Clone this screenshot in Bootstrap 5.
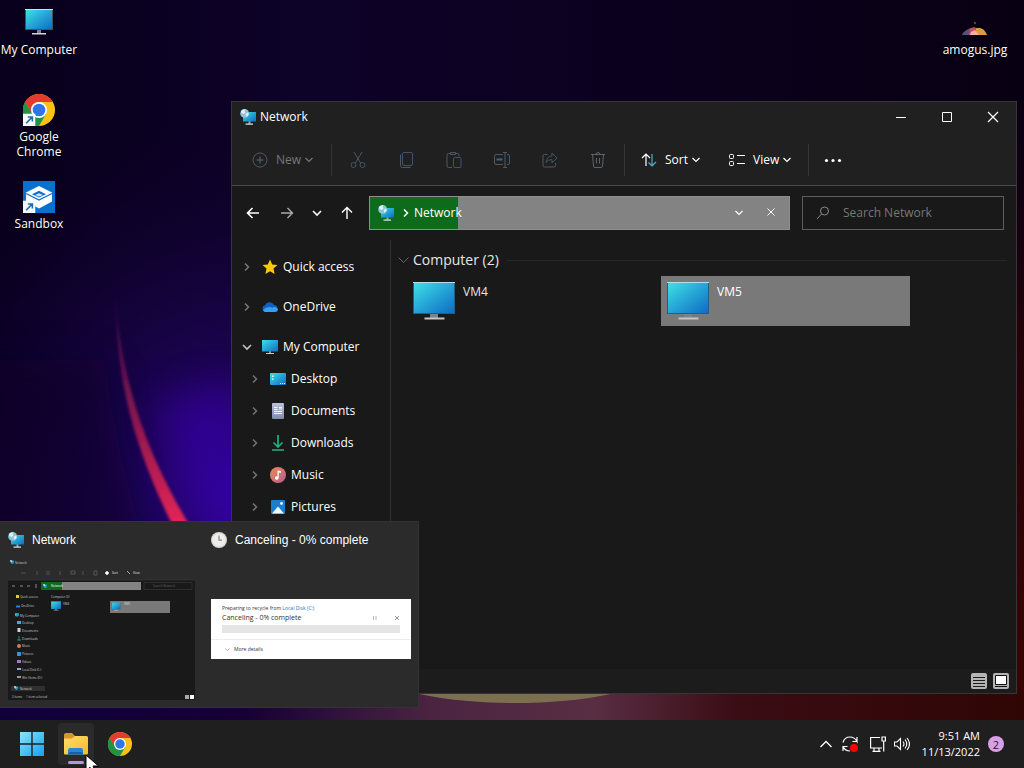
<!DOCTYPE html>
<html lang="en" data-bs-theme="dark">
<head>
<meta charset="utf-8">
<meta name="viewport" content="width=device-width, initial-scale=1">
<title>Desktop</title>
<link href="https://cdn.jsdelivr.net/npm/bootstrap@5.3.0/dist/css/bootstrap.min.css" rel="stylesheet">
<style>
  body { font-family: "Open Sans", "Noto Sans", sans-serif; font-size: 12px; line-height: 16px; color: #fff; background: #0b0120; }
  svg { display: block; flex: none; }
  button { color: inherit; background: none; border: 0; padding: 0; }
  a { color: inherit; text-decoration: none; }
  .i16 { width: 16px; height: 16px; }
  .i20 { width: 20px; height: 20px; }
  .stroke { fill: none; stroke: currentColor; }
  .wallpaper { position: absolute; inset: 0; width: 100%; height: 100%; }

  .icons-area { padding: 7px 10px 0 0; }
  .shortcut { width: 78px; height: 87px; line-height: 15px; gap: 3px; text-shadow: 0 1px 2px #000; }
  .shortcut svg { width: 32px; height: 32px; }

  .explorer { position: absolute; left: 231px; right: 7px; top: 101px; bottom: 26px; background: #191919; border: 1px solid #3a3338; }
  .titlebar { height: 29px; background: #202020; }
  .titlebar .caption-btn { width: 46px; height: 29px; }
  .tools { height: 55px; background: #202020; border-bottom: 1px solid #484848; padding-top: 4px; }
  .tools .divider { width: 1px; height: 32px; background: #343434; }
  .tool-set { padding: 0 2px; }
  .tool { width: 48px; height: 32px; color: #4c5964; }
  .btn-new { width: 99px; padding-left: 20px; color: #777; }
  .btn-sort { width: 88px; padding-left: 16px; }
  .btn-view { width: 95px; padding-left: 16px; }
  .address-row { height: 54px; padding: 0 12px 0 2px; }
  .step { width: 30px; height: 34px; }
  .address { height: 34px; border: 1px solid #8e8e8e; background: #838383; margin-left: 7px; margin-right: 12px; }
  .address .load { position: absolute; inset: 0; height: 100%; border-radius: 0; background: #838383; }
  .address .load .progress-bar { background: #0f6b1c; }
  .address .trail { gap: 16px; padding-right: 10px; }
  .search { width: 202px; height: 34px; border: 1px solid #5e5e5e; padding: 0 12px; color: #8a8a8a; }
  .search input { background: none; border: 0; outline: 0; color: #ccc; min-width: 0; padding: 0; }
  .search input::placeholder { color: #777; opacity: 1; }
  .tree { width: 159px; border-right: 1px solid #303030; padding: 11px 0 0 7px; }
  .tree a { height: 32px; gap: 5px; }
  .tree .chev { color: #777; margin-right: 2px; }
  .tree .open { color: #c4c4c4; }
  .tree .top { margin-bottom: 8px; }
  .tree .sub { padding-left: 8px; }
  .files { padding: 10px 9px 0 6px; }
  .group-head { font-size: 14px; line-height: 20px; color: #e6e6e6; }
  .group-head hr { margin: 0 0 0 8px; color: #555; }
  .tiles { padding: 6px 0 0 10px; gap: 5px; }
  .tile { width: 249px; height: 50px; padding: 0 6px; gap: 8px; border: 0; color: #e6e6e6; }
  .tile svg { width: 42px; height: 42px; margin-top: 4px; }
  .tile span { margin-top: 8px; }
  .tile.active { background: #797979; color: #fff; }
  .statusbar { height: 24px; background: #1c1c1c; padding-right: 7px; gap: 6px; }

  .previews { position: absolute; left: 0; bottom: 12px; width: 419px; height: 187px; background: #2b2b2b; border: 1px solid #333; border-left: 0; font-family: "Liberation Sans", sans-serif; }
  .previews .head { height: 36px; gap: 8px; padding-left: 8px; }
  .pane-a { width: 203px; }
  .mini { width: 188px; height: 146px; margin-left: 8px; font-family: "Open Sans", sans-serif; }
  .progress-card { margin: 41px 7px 0 8px; height: 60px; background: #fff; color: #333; font: 5px/8px "Open Sans", sans-serif; padding: 5px 11px 0; }
  .progress-card .state { font-size: 7px; line-height: 11px; }
  .progress-card a { color: #1776c8; }
  .progress-card .track { height: 8px; margin: 2px 0 6px; border-radius: 0; background: #e5e5e5; }
  .progress-card .more { margin: 0 -11px; padding: 5px 14px; border-top: 1px solid #ececec; }

  .taskbar { height: 48px; background: #1f1f1f; padding: 0 20px 0 10px; z-index: 3; }
  .task { width: 44px; height: 44px; }
  .task-icon { width: 36px; height: 42px; border-radius: 4px; }
  .current .task-icon { background: #2a2a2a; }
  .task .mark-line { position: absolute; left: 14px; right: 14px; bottom: 2px; height: 3px; border-radius: 2px; background: #b594d8; }
  .clock { font-size: 11px; line-height: 16px; margin: 0 8px 0 12px; }
  .count { width: 16px; height: 16px; background: #d9a0e6; color: #2b1430; font-size: 11px; font-weight: 400; }
  .pointer { position: absolute; left: 85px; bottom: -6px; width: 14px; height: 20px; z-index: 5; }
</style>
</head>
<body class="vh-100 d-flex flex-column overflow-hidden position-relative">

<svg width="0" height="0" class="position-absolute" aria-hidden="true">
  <defs>
    <linearGradient id="scr" x1="0" y1="0" x2="1" y2="1"><stop offset="0" stop-color="#3fe0e6"/><stop offset=".5" stop-color="#25a5d6"/><stop offset="1" stop-color="#0e6cc4"/></linearGradient>
    <linearGradient id="win" x1="0" y1="0" x2="1" y2="1"><stop offset="0" stop-color="#8be4fb"/><stop offset="1" stop-color="#14a0ee"/></linearGradient>
    <linearGradient id="fold" x1="0" y1="0" x2="1" y2="1"><stop offset="0" stop-color="#ffdd6a"/><stop offset="1" stop-color="#f4ba2c"/></linearGradient>
    <linearGradient id="mus" x1="0" y1="0" x2="1" y2="1"><stop offset="0" stop-color="#ee8a50"/><stop offset="1" stop-color="#b65c96"/></linearGradient>
    <linearGradient id="docg" x1="0" y1="0" x2="0" y2="1"><stop offset="0" stop-color="#b9c3d8"/><stop offset="1" stop-color="#7f8cab"/></linearGradient>
  </defs>
  <symbol id="pc" viewBox="0 0 42 42"><path d="M17 34h8v4h-8z" fill="#7d8388"/><path d="M11.500 37.500h20v2h-20z" fill="#c3c7ca"/><path d="M0 2h42v32H0z" fill="#235e80"/><path d="M0 2h42v1H0z" fill="#b5dce8"/><path d="M1 3h40v30H1z" fill="url(#scr)"/></symbol>
  <symbol id="pc-s" viewBox="0 0 16 16"><path d="M7 12h2v2H7z" fill="#8b9298"/><path d="M4 14h8v1H4z" fill="#c9ced2"/><path d="M0 1h16v11.500H0z" fill="url(#scr)"/></symbol>
  <symbol id="net" viewBox="0 0 16 16"><path d="M8.500 12h2v3h-2z" fill="#8fa0aa"/><path d="M5.500 14.500h7.500v1.200H5.500z" fill="#dfe6ea"/><path d="M3 3h13v9.500H3z" fill="url(#scr)"/><circle cx="4.600" cy="4.400" r="4.400" fill="#8cc5d8"/><path d="M1 2.600C2 .8 4 0 5.600.300L4.500 2 5.500 3.500 3.500 5 1.500 4zM5.500 5 8 3.500 8.700 5.500 6.600 8z" fill="#e2f2f4"/></symbol>
  <symbol id="chrome" viewBox="0 0 48 48"><circle cx="24" cy="24" r="24" fill="#fbc116"/><path d="M3.200 12A24 24 0 0 0 24 48L34.400 30 24 24H10.200z" fill="#229342"/><path d="M3.200 12A24 24 0 0 1 44.800 12H24A12 12 0 0 0 13.600 30z" fill="#e33b2e"/><path d="M3.200 12 13.600 30 24 36 18 47.200A24 24 0 0 1 3.200 12z" fill="#229342"/><circle cx="24" cy="24" r="12" fill="#fff"/><circle cx="24" cy="24" r="9.500" fill="#2f75e8"/></symbol>
  <symbol id="arrow-badge" viewBox="0 0 12 12"><path d="M0 0h12v12H0z" fill="#f5f9fc"/><path d="M3 9.300 8.300 4M4.600 3.300H9v4.400" fill="none" stroke="#1a6ea5" stroke-width="1.500"/></symbol>
  <symbol id="down" viewBox="0 0 16 16"><path d="m4.500 6 3.500 3.500L11.500 6" class="stroke" stroke-width="1.200"/></symbol>
  <symbol id="right" viewBox="0 0 16 16"><path d="m6 4.500 3.500 3.500L6 11.500" class="stroke" stroke-width="1.500"/></symbol>
  <symbol id="x" viewBox="0 0 16 16"><path d="m3 3 10 10M13 3 3 13" class="stroke" stroke-width="1.200"/></symbol>
</svg>

<svg class="wallpaper" viewBox="0 0 1024 768" preserveAspectRatio="none" aria-hidden="true">
  <defs>
    <linearGradient id="base" x1="0" y1="0" x2="1" y2="0"><stop offset="0" stop-color="#08001c"/><stop offset=".3" stop-color="#0d0228"/><stop offset=".7" stop-color="#0b011c"/><stop offset="1" stop-color="#080012"/></linearGradient>
    <radialGradient id="violet" gradientUnits="userSpaceOnUse" cx="245" cy="500" r="380"><stop offset="0" stop-color="#2d0490"/><stop offset=".3" stop-color="#200360" stop-opacity=".9"/><stop offset=".6" stop-color="#160340" stop-opacity=".7"/><stop offset="1" stop-color="#0e0128" stop-opacity="0"/></radialGradient>
    <linearGradient id="arc" x1="0" y1="0" x2="0" y2="1"><stop offset="0" stop-color="#5a1068" stop-opacity="0"/><stop offset=".4" stop-color="#6c124c"/><stop offset="1" stop-color="#e82455"/></linearGradient>
    <linearGradient id="floor" x1="0" y1="0" x2="1" y2="0"><stop offset="0" stop-color="#10003a"/><stop offset=".24" stop-color="#160036"/><stop offset=".42" stop-color="#4a2441"/><stop offset=".58" stop-color="#592e43"/><stop offset=".72" stop-color="#3a0c14"/><stop offset="1" stop-color="#300604"/></linearGradient>
    <linearGradient id="edge" x1="0" y1="0" x2="0" y2="1"><stop offset="0" stop-color="#170010" stop-opacity="0"/><stop offset=".4" stop-color="#220209"/><stop offset="1" stop-color="#380503"/></linearGradient>
    <filter id="soft"><feGaussianBlur stdDeviation="1.500"/></filter>
    <filter id="glow" filterUnits="userSpaceOnUse" x="-100" y="150" width="500" height="500"><feGaussianBlur stdDeviation="18"/></filter>
  </defs>
  <path d="M0 0h1024v768H0z" fill="url(#base)"/>
  <path d="M0 0h700v768H0z" fill="url(#violet)"/>
  <path d="M160 400C166 440 180 480 205 530L250 530 240 380z" fill="#3a05b4" opacity=".5" filter="url(#glow)"/>
  <path d="M-60 360h165C112 420 125 480 150 560H-60z" fill="#080028" opacity=".6" filter="url(#glow)"/>
  <path d="M115 285C115 370 130 440 174 528H191C145 450 120 380 115 285z" fill="url(#arc)" filter="url(#soft)"/>
  <path d="M0 690h1024v32H0z" fill="url(#floor)"/>
  <path d="M1012 90h12v600h-12z" fill="url(#edge)"/>
  <ellipse cx="515" cy="675" rx="130" ry="28" fill="#7b6f50"/>
</svg>

<main class="icons-area flex-grow-1 position-relative d-flex justify-content-between align-items-start">
  <nav class="d-flex flex-column" aria-label="Desktop shortcuts">
    <a href="#" class="shortcut d-flex flex-column align-items-center text-center"><svg viewBox="0 0 32 32"><path d="M14 23h4v4h-4z" fill="#7d8388"/><path d="M9 26h14v1.500H9z" fill="#d2d6d8"/><path d="M2 2h28v21H2z" fill="#3a5666"/><path d="M2 2h28v1H2z" fill="#cfe3ea"/><path d="M3 3h26v19H3z" fill="url(#scr)"/></svg>My Computer</a>
    <a href="#" class="shortcut d-flex flex-column align-items-center text-center"><svg viewBox="0 0 32 32"><use href="#chrome" width="32" height="32"/><use href="#arrow-badge" y="19.500" width="12.500" height="12.500"/></svg>Google Chrome</a>
    <a href="#" class="shortcut d-flex flex-column align-items-center text-center"><svg viewBox="0 0 32 32"><path d="M0 0h32v32H0z" fill="#0a70d0"/><path d="m16 5 13 6.500v9L16 27.500 3 20.500v-9z" fill="#fff"/><path d="m3 12.500 13 6.500 13-6.500" fill="none" stroke="#0a70d0" stroke-width="1.300"/><path d="m9 13.200 7-3.400 7 3.400-7 3.300z" fill="#0a70d0"/><path d="m12 13.900 4 1.700 4-1.700-4-1.600z" fill="#cfe5f8"/><use href="#arrow-badge" y="19.500" width="12.500" height="12.500"/></svg>Sandbox</a>
  </nav>
  <a href="#" class="shortcut d-flex flex-column align-items-center text-center"><svg viewBox="0 0 32 32"><path d="M3 28c2-4 6-6 9-7h6c4 1 7 3 10 7z" fill="#9d5c84"/><path d="M3 28c2-4 5-5 8-6l-1 6z" fill="#58507e"/><path d="M11 21.500 15 20l2 1-2 7h-5z" fill="#c64d5a"/><path d="M17 21h4c4 1 5 3 7 7H17z" fill="#dd9a42"/><path d="m12 25 4-2 4 5h-9z" fill="#f0b4a0"/><circle cx="16" cy="16" r="1.200" fill="#405038"/></svg>amogus.jpg</a>

  <section class="explorer d-flex flex-column" aria-label="Network window">
    <header class="titlebar d-flex align-items-center">
      <svg class="i16 ms-2 me-1"><use href="#net"/></svg><span class="me-auto">Network</span>
      <button class="caption-btn d-flex align-items-center justify-content-center" aria-label="Minimize"><svg class="i16 stroke" viewBox="0 0 16 16"><path d="M3 8.500h10"/></svg></button>
      <button class="caption-btn d-flex align-items-center justify-content-center" aria-label="Maximize"><svg class="i16 stroke" viewBox="0 0 16 16"><path d="M3.500 3.500h9v9h-9z"/></svg></button>
      <button class="caption-btn d-flex align-items-center justify-content-center" aria-label="Close"><svg class="i16"><use href="#x"/></svg></button>
    </header>

    <div class="tools d-flex align-items-center" role="toolbar" aria-label="Commands">
      <button class="btn-new d-flex align-items-center"><svg class="i16 stroke" viewBox="0 0 16 16"><circle cx="8" cy="8" r="7" stroke="#53595f"/><path d="M4.500 8h7M8 4.500v7" stroke="#4f6b80"/></svg><span class="ms-2">New</span><svg class="i16"><use href="#down"/></svg></button>
      <span class="divider"></span>
      <div class="tool-set d-flex">
        <button class="tool d-flex align-items-center justify-content-center" aria-label="Cut"><svg class="i20 stroke" viewBox="0 0 20 20"><path d="m6 2 6.700 11.200M14 2 7.300 13.200"/><circle cx="5.500" cy="15" r="2.500" stroke="#3d566e"/><circle cx="14.500" cy="15" r="2.500" stroke="#3d566e"/></svg></button>
        <button class="tool d-flex align-items-center justify-content-center" aria-label="Copy"><svg class="i20 stroke" viewBox="0 0 20 20"><rect x="6.500" y="2.500" width="10" height="13" rx="1.500" stroke="#3d566e"/><path d="M4.500 4.500v11q0 2 2 2h8"/></svg></button>
        <button class="tool d-flex align-items-center justify-content-center" aria-label="Paste"><svg class="i20 stroke" viewBox="0 0 20 20"><path d="M8 17.500H4.500q-1.500 0-1.500-1.500V5q0-1.500 1.500-1.500H6m6 0h1.500Q15 3.500 15 5v1.500M6.500 2.500h5v2h-5z"/><rect x="9.500" y="7.500" width="7.500" height="10" rx="1" stroke="#3d566e"/></svg></button>
        <button class="tool d-flex align-items-center justify-content-center" aria-label="Rename"><svg class="i20 stroke" viewBox="0 0 20 20"><path d="M11 4.500H4Q2.500 4.500 2.500 6v7q0 1.500 1.500 1.500h7m4-10h1q1.500 0 1.500 1.500v7q0 1.500-1.500 1.500h-1M11 2.500h4M13 2.500v15M11 17.500h4"/><path d="M4.500 9.500h6" stroke="#3d6688" stroke-width="2"/></svg></button>
        <button class="tool d-flex align-items-center justify-content-center" aria-label="Share"><svg class="i20 stroke" viewBox="0 0 20 20"><path d="M7.500 4.500h-3q-1.500 0-1.500 1.500v9.500Q3 17 4.500 17h9.500q1.500 0 1.500-1.500V13"/><path d="M12 3v3q-5 0-6 6.500 2-3 6-3V13l5-5z" stroke="#3d566e"/></svg></button>
        <button class="tool d-flex align-items-center justify-content-center" aria-label="Delete"><svg class="i20 stroke" viewBox="0 0 20 20"><path stroke="#5d6368" d="M3 4.500h14M8 4.500q0-2 2-2t2 2M4.500 4.500l1 11.500q.2 1.500 1.500 1.500h6q1.300 0 1.500-1.500l1-11.500M8.500 8v5.500M11.500 8v5.500"/></svg></button>
      </div>
      <span class="divider"></span>
      <button class="btn-sort d-flex align-items-center"><svg class="i16 stroke" viewBox="0 0 16 16" stroke-width="1.200"><path d="M5 14V2M1 6l4-4 4 4"/><path d="M11 2v12M7.500 10.500 11 14l4-4" stroke="#4faecb"/></svg><span class="ms-2">Sort</span><svg class="i16"><use href="#down"/></svg></button>
      <button class="btn-view d-flex align-items-center"><svg class="i16 stroke" viewBox="0 0 16 16"><rect x=".5" y="2.500" width="4" height="4" rx="1"/><rect x=".5" y="9.500" width="4" height="4" rx="1"/><path d="M8 3.500h8M8 11.500h8"/></svg><span class="ms-2">View</span><svg class="i16"><use href="#down"/></svg></button>
      <span class="divider"></span>
      <button class="tool d-flex align-items-center justify-content-center text-white" aria-label="More"><svg class="i20" viewBox="0 0 20 20" fill="currentColor"><circle cx="3.500" cy="10.500" r="1.600"/><circle cx="10" cy="10.500" r="1.600"/><circle cx="16.500" cy="10.500" r="1.600"/></svg></button>
    </div>

    <div class="address-row d-flex align-items-center">
      <button class="step ms-1 d-flex align-items-center justify-content-center" aria-label="Back"><svg class="i16 stroke" viewBox="0 0 16 16" stroke-width="1.600"><path d="M14 8H2.500M7.500 3l-5 5 5 5"/></svg></button>
      <button class="step ms-1 d-flex align-items-center justify-content-center" aria-label="Forward"><svg class="i16 stroke" viewBox="0 0 16 16" stroke-width="1.400" color="#aaa"><path d="M2 8h11.500M8.500 3l5 5-5 5"/></svg></button>
      <button class="step d-flex align-items-center justify-content-center" aria-label="Recent"><svg class="i16 stroke" viewBox="0 0 16 16" stroke-width="1.600"><path d="m4 6 4 4 4-4"/></svg></button>
      <button class="step d-flex align-items-center justify-content-center" aria-label="Up"><svg class="i16 stroke" viewBox="0 0 16 16" stroke-width="1.400"><path d="M8 14V2.500M3 7.500l5-5 5 5"/></svg></button>
      <div class="address position-relative flex-grow-1 d-flex align-items-center">
        <div class="load progress" role="progressbar" aria-label="Loading" aria-valuenow="21" aria-valuemin="0" aria-valuemax="100"><div class="progress-bar" style="width:21%"></div></div>
        <div class="position-relative flex-grow-1 d-flex align-items-center trail">
          <div class="d-flex align-items-center me-auto"><svg class="i16 ms-2 me-1"><use href="#net"/></svg><svg class="i16"><use href="#right"/></svg><a href="#">Network</a></div>
          <button aria-label="Previous locations"><svg class="i16"><use href="#down"/></svg></button>
          <button aria-label="Stop loading"><svg class="i16 stroke" viewBox="0 0 16 16"><path d="m4.500 3.500 7 7m0-7-7 7"/></svg></button>
        </div>
      </div>
      <label class="search d-flex align-items-center gap-2"><svg class="i16 stroke" viewBox="0 0 16 16"><circle cx="9.500" cy="6" r="4"/><path d="M6.500 9 2 14"/></svg><input class="flex-grow-1 ms-1" type="text" placeholder="Search Network" aria-label="Search Network"></label>
    </div>

    <div class="flex-grow-1 d-flex overflow-hidden">
      <nav class="tree flex-shrink-0" aria-label="Folders">
        <a href="#" class="top d-flex align-items-center"><svg class="i16 chev"><use href="#right"/></svg><svg class="i16" viewBox="0 0 16 16"><path d="m8 .5 2.200 4.900 5.300.6-4 3.600 1.100 5.400L8 12.300 3.400 15l1.100-5.400L.5 6l5.300-.6z" fill="#fcc80a"/></svg>Quick access</a>
        <a href="#" class="top d-flex align-items-center"><svg class="i16 chev"><use href="#right"/></svg><svg class="i16" viewBox="0 0 16 16"><path d="M3.500 13A3.500 3.500 0 0 1 3 6.200 5 5 0 0 1 12 6a3.600 3.600 0 0 1 1 7z" fill="#0b62c2"/><path d="M3 13q-1.500-.5-2-2 3-3 6-3 2 0 3.500.8Q12 7.500 14.500 8.500 16 9.800 16 10.500 15.500 13 13 13z" fill="#35a0f2"/></svg>OneDrive</a>
        <a href="#" class="d-flex align-items-center"><svg class="i16 chev open" viewBox="0 0 16 16"><path class="stroke" stroke-width="1.600" d="m4 6 4 4 4-4"/></svg><svg class="i16"><use href="#pc-s"/></svg>My Computer</a>
        <a href="#" class="sub d-flex align-items-center"><svg class="i16 chev"><use href="#right"/></svg><svg class="i16" viewBox="0 0 16 16"><rect y="2" width="16" height="12" rx="1" fill="url(#scr)"/><path d="M2 4.500h1.500V6H2zm0 3h1.500V9H2z" fill="#dff"/><path d="M10 12h1v1h-1zm2 0h1v1h-1zm2 0h1v1h-1z" fill="#dff"/></svg>Desktop</a>
        <a href="#" class="sub d-flex align-items-center"><svg class="i16 chev"><use href="#right"/></svg><svg class="i16" viewBox="0 0 16 16"><rect x="2" width="12" height="16" rx="1" fill="url(#docg)"/><path d="M4 4.500h3.500M4 6.500h3.500M4 8.500h8M4 10.500h8M9 4.500h3M9 6h3" stroke="#f4f6fb"/></svg>Documents</a>
        <a href="#" class="sub d-flex align-items-center"><svg class="i16 chev"><use href="#right"/></svg><svg class="i16" viewBox="0 0 16 16" fill="none" stroke="#22b07d" stroke-width="1.700"><path d="M8 0v12M3.500 7.500 8 12l4.500-4.500M2 15h12"/></svg>Downloads</a>
        <a href="#" class="sub d-flex align-items-center"><svg class="i16 chev"><use href="#right"/></svg><svg class="i16" viewBox="0 0 16 16"><circle cx="8" cy="8" r="8" fill="url(#mus)"/><path d="M7.500 3.500 11 4v1.800l-2.300-.3V11a1.900 1.700 0 1 1-1.200-1.600z" fill="#fff"/></svg>Music</a>
        <a href="#" class="sub d-flex align-items-center"><svg class="i16 chev"><use href="#right"/></svg><svg class="i16" viewBox="0 0 16 16"><rect x="1" y="1" width="14" height="14" rx="1" fill="#1a7ed0"/><path d="M2 14.500 8 7.500l6 7z" fill="#f0f7fc"/><circle cx="11.500" cy="4.500" r="1.400" fill="#f0f7fc"/></svg>Pictures</a>
      </nav>
      <div class="files flex-grow-1">
        <div class="group-head d-flex align-items-center"><svg class="i16" viewBox="0 0 16 16"><path d="m1.500 5.500 5 5 5-5" fill="none" stroke="#666"/></svg>Computer (2)<hr class="flex-grow-1"></div>
        <div class="tiles d-flex flex-wrap">
          <button class="tile d-flex align-items-start text-start"><svg><use href="#pc"/></svg><span>VM4</span></button>
          <button class="tile active d-flex align-items-start text-start"><svg><use href="#pc"/></svg><span>VM5</span></button>
        </div>
      </div>
    </div>

    <footer class="statusbar d-flex align-items-center justify-content-end">
      <button aria-label="Details view"><svg class="i16" viewBox="0 0 16 16"><rect width="16" height="16" rx="2" fill="#b4b4b4"/><path d="M2 4.500h12M2 7.500h12M2 10.500h12M2 13.500h12" stroke="#1c1c1c"/></svg></button>
      <button aria-label="Large icons view"><svg class="i16" viewBox="0 0 16 16"><rect width="16" height="16" rx="2" fill="#b4b4b4"/><path d="M2.500 2.500h11v9h-11z" fill="#fff" stroke="#111"/><path d="M2 13.500h12" stroke="#111"/></svg></button>
    </footer>
  </section>

  <aside class="previews d-flex" aria-label="Window previews">
    <div class="pane-a">
      <div class="head d-flex align-items-center"><svg class="i16"><use href="#net"/></svg>Network</div>
      <svg class="mini" viewBox="0 0 188 146" font-size="3" fill="#ccc">
        <use href="#net" x="2" y="2" width="4" height="4"/><text x="7" y="6">Network</text>
        <g stroke="#606468" fill="none" stroke-width=".7"><path d="M13 15h5M29 13v4M39 13v4M41 13v4M52 13v4M63 13h4v3h-4zM75 13v4M86 13h3v4h-3z"/></g>
        <path d="m97 15 2-2 2 2-2 2zM119 13l3 3" fill="#fff" stroke="#ddd" stroke-width=".7"/><text x="104" y="16" fill="#eee">Sort</text><text x="125" y="16" fill="#eee">View</text>
        <path d="M0 22h187v120H0z" fill="#191919"/><path d="M0 22h187" stroke="#3c3c3c" stroke-width=".6"/>
        <path d="M4 28h3M12 28h3M19 28h3M28 26v4" stroke="#bbb" stroke-width=".7"/>
        <path d="M33 24h100v8H33z" fill="#838383"/><path d="M33 24h21v8H33z" fill="#0f6b1c"/><use href="#net" x="35" y="26" width="4" height="4"/><text x="43" y="29" fill="#fff">Network</text>
        <path d="M136 24.500h48v7h-48z" fill="none" stroke="#3b3b3b" stroke-width=".6"/><text x="145" y="29" fill="#666">Search Network</text>
        <text x="43" y="40">Computer (2)</text>
        <use href="#pc" x="43" y="43" width="10" height="10"/><text x="55" y="47">VM4</text>
        <path d="M102 43h60v12h-60z" fill="#797979"/><use href="#pc" x="103.500" y="44" width="9" height="9"/><text x="116" y="47" fill="#ddd">VM5</text>
        <path d="M3 128h34v5H3z" fill="#303030"/>
        <g><path d="M8 37h3v3H8z" fill="#fcc80a"/><text x="12" y="40">Quick access</text><path d="M8 47.500h4v2H8z" fill="#2580e0"/><text x="13" y="49">OneDrive</text>
        <use href="#pc-s" x="7" y="55" width="4" height="4"/><text x="12" y="59">My Computer</text>
        <path d="M9 63h4v3H9z" fill="#30b5da"/><text x="14" y="66">Desktop</text><path d="M9.500 70h3v4h-3z" fill="#ccd2e2"/><text x="14" y="74">Documents</text>
        <path d="M11 78v4M9 82h4" stroke="#22b07d" stroke-width=".8"/><text x="14" y="82">Downloads</text><circle cx="11" cy="88" r="2" fill="#dc7758"/><text x="14" y="89">Music</text>
        <path d="M9 94h4v4H9z" fill="#3590dd"/><text x="14" y="97">Pictures</text><path d="M9 102h4v3H9z" fill="#a778bd"/><text x="14" y="105">Videos</text>
        <path d="M9 110h4v2H9z" fill="#9ac"/><text x="14" y="113">Local Disk (C:)</text><path d="M9 118h4v2H9z" fill="#999"/><text x="14" y="121">Win Home (D:)</text>
        <use href="#net" x="6" y="128" width="4" height="4"/><text x="12" y="131.500">Network</text></g>
        <text x="4" y="140">2 items</text><text x="18" y="140">1 item selected</text>
        <path d="M177 137h4v4h-4z" fill="#aaa"/><path d="M182 137h4v4h-4z" fill="#fff"/>
      </svg>
    </div>
    <div class="flex-grow-1">
      <div class="head d-flex align-items-center"><svg class="i16" viewBox="0 0 16 16"><circle cx="8" cy="8" r="8" fill="#ddd9d8"/><circle cx="8" cy="8" r="6.500" fill="#f0eded"/><path d="M8 3.500v4.700h3" fill="none" stroke="#8b8583" stroke-width="1.200"/></svg>Canceling - 0% complete</div>
      <div class="progress-card">
        <div>Preparing to recycle from <a href="#">Local Disk (C:)</a></div>
        <div class="state d-flex align-items-center">Canceling - 0% complete
          <button class="ms-auto me-3" aria-label="Pause"><svg width="6" height="6" viewBox="0 0 6 6"><path d="M1.500 1v4M4 1v4" stroke="#999" stroke-width=".7"/></svg></button>
          <button aria-label="Cancel"><svg width="6" height="6" viewBox="0 0 6 6"><path d="m1 1 4 4m0-4L1 5" stroke="#777" stroke-width=".8"/></svg></button></div>
        <div class="track progress" role="progressbar" aria-label="Recycle progress" aria-valuenow="0" aria-valuemin="0" aria-valuemax="100"></div>
        <div class="more d-flex align-items-center"><svg width="5" height="5" viewBox="0 0 5 5"><path d="m.5 1.500 2 2 2-2" fill="none" stroke="#777" stroke-width=".6"/></svg><span class="ms-1">More details</span></div>
      </div>
    </div>
  </aside>
</main>

<footer class="taskbar d-flex align-items-center position-relative">
  <button class="task d-flex align-items-center justify-content-center" aria-label="Start"><svg width="24" height="24" viewBox="0 0 24 24"><path d="M0 0h11.300v11.300H0zM12.700 0H24v11.300H12.700zM0 12.700h11.300V24H0zM12.700 12.700H24V24H12.700z" fill="url(#win)"/></svg></button>
  <button class="task current position-relative d-flex align-items-center justify-content-center" aria-label="File Explorer"><span class="task-icon d-flex align-items-center justify-content-center"><svg width="26" height="26" viewBox="0 0 26 26"><path d="M1 4q0-2 2-2h6l3 3h11q2 0 2 2v4H1z" fill="#d9952a"/><path d="M1 7.500h8L12 5h11q2 0 2 2v15.500q0 1-1 1H2q-1 0-1-1z" fill="url(#fold)"/><path d="M5 23.500V19q0-2 2-2h11q2 0 2 2v4.500z" fill="#2a86cf"/><path d="M5 23.500q0-2.500 2-2.500h11q2 0 2 2.500z" fill="#1461a8"/></svg></span><span class="mark-line"></span></button>
  <button class="task d-flex align-items-center justify-content-center" aria-label="Google Chrome"><svg width="24" height="24"><use href="#chrome"/></svg></button>
  <button class="ms-auto" aria-label="Hidden icons"><svg class="i16 stroke" viewBox="0 0 16 16" stroke-width="1.300"><path d="m2.500 11 5.500-5.500 5.500 5.500"/></svg></button>
  <button class="ms-2" aria-label="Updates"><svg class="i16 stroke" viewBox="0 0 16 16" stroke-width="1.200"><path d="M1 6.500Q2.500 1 8 1q4.500 0 7 4.500V1M15 5.500h-4.500M1 15v-4.500h4.500M1 10.500Q3 15 8 15"/><circle cx="12" cy="12" r="4" fill="#f00" stroke="none"/></svg></button>
  <button class="ms-2 ps-1" aria-label="Network status"><svg class="i16 stroke" viewBox="0 0 16 16" stroke-width="1.200"><path d="M10 1.500H.6V12H12M4 12v3.500M9 12v3.500M2.500 15.400h8M12 1h3.400v4H12zM13.700 5v10.500"/></svg></button>
  <button class="ms-2" aria-label="Volume"><svg class="i16 stroke" viewBox="0 0 16 16" stroke-width="1.100"><path d="M.5 6v4H3l3.500 3.500v-11L3 6zM9 5.500q2 2.500 0 5M11 3.500q3.500 4.500 0 9M13 2q5 6 0 12"/></svg></button>
  <button class="clock text-end">9:51 AM<br>11/13/2022</button>
  <button class="count badge rounded-circle d-flex align-items-center justify-content-center p-0" aria-label="2 notifications">2</button>
  <svg class="pointer" viewBox="0 0 14 20"><path d="M1 1v16l4-3.800 2.500 6 3-1.300L8 12h5.500z" fill="#fff" stroke="#000"/></svg>
</footer>

<script src="https://cdn.jsdelivr.net/npm/bootstrap@5.3.0/dist/js/bootstrap.bundle.min.js"></script>
</body>
</html>
